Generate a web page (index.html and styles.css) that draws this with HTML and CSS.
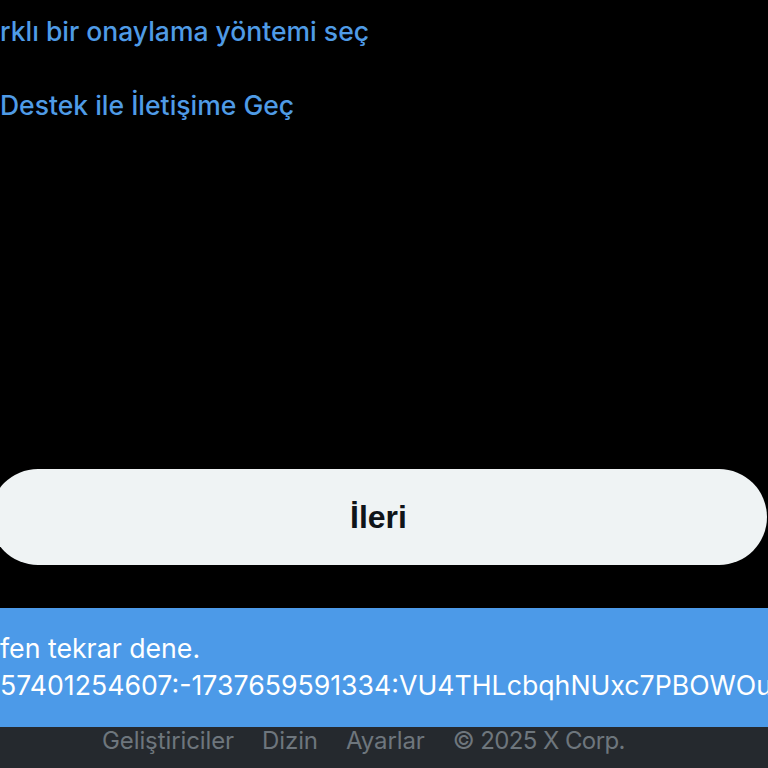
FILE: index.html
```html
<!DOCTYPE html>
<html lang="tr">
<head>
<meta charset="utf-8">
<link rel="stylesheet" href="styles.css">
</head>
<body>
<div class="page">
  <div class="links">
    <a class="link">rklı bir onaylama yöntemi seç</a>
    <a class="link">Destek ile İletişime Geç</a>
  </div>
  <div class="spacer"></div>
  <div class="btnwrap"><button class="next">İleri</button></div>
  <div class="toast">
    <div class="toast-line">fen tekrar dene.</div>
    <div class="toast-line">57401254607:-1737659591334:VU4THLcbqhNUxc7PBOWOu</div>
  </div>
  <footer class="footer">
    <span>Geliştiriciler</span>
    <span>Dizin</span>
    <span>Ayarlar</span>
    <span class="copy">© 2025 X Corp.</span>
  </footer>
</div>
</body>
</html>
```
FILE: styles.css
```css
html, body {
  margin: 0;
  padding: 0;
  background: #000;
  overflow: hidden;
}
.page {
  width: 768px;
  height: 768px;
  display: flex;
  flex-direction: column;
  font-family: Inter, "Noto Sans", sans-serif;
  overflow: hidden;
}
.links {
  display: flex;
  flex-direction: column;
  padding-top: 16px;
  gap: 44px;
}
.link {
  color: #4f9be6;
  font-size: 26.5px;
  font-weight: 500;
  line-height: 30px;
  white-space: nowrap;
}
.spacer { flex: 1; }
.btnwrap {
  display: flex;
  margin-left: -10px;
  margin-right: 1px;
}
.next {
  flex: 1;
  height: 96px;
  border: none;
  border-radius: 48px;
  background: #eff3f4;
  color: #0f1419;
  font-family: "Liberation Sans", Arial, sans-serif;
  font-weight: bold;
  font-size: 32px;
  padding: 0;
}
.toast {
  margin-top: 43px;
  height: 119px;
  background: #4c9ae8;
  color: #fff;
  font-size: 26.7px;
  line-height: 37px;
  padding-top: 22px;
  box-sizing: border-box;
  white-space: nowrap;
  overflow: hidden;
}
.footer {
  height: 41px;
  background: #25292e;
  color: #6e767d;
  font-size: 24px;
  letter-spacing: -0.1px;
  display: flex;
  gap: 28px;
  padding-left: 102px;
  line-height: 28px;
}
.copy { letter-spacing: -0.6px; }
```
